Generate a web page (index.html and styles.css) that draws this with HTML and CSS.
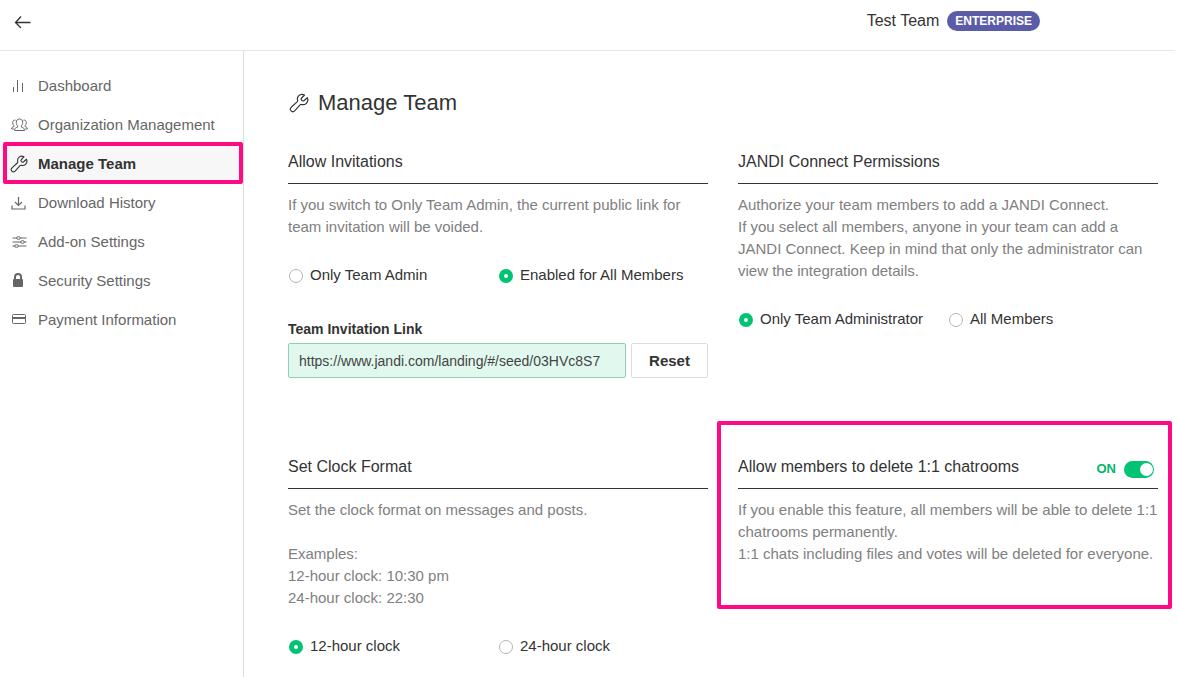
FILE: index.html
```html
<!DOCTYPE html>
<html lang="en">
<head>
    <meta charset="UTF-8">
    <meta name="viewport" content="width=device-width, initial-scale=1.0">
    <title>Manage Team</title>
    <link rel="stylesheet" href="styles.css">
</head>
<body>

    <!-- Wrench shared by the menu and the page title -->
    <svg class="sprite" aria-hidden="true">
        <symbol id="wrench" viewBox="0 0 20 20">
            <path stroke-width="1.2" stroke-linejoin="round" d="M18.300 4.700 15.200 7.500C14.300 8.200 13.200 7.900 12.600 7.200 12 6.500 12 5.700 12.600 5L15.500 2C13.500 1 11 1.300 9.600 2.900 8.400 4.200 8.200 5.900 8.600 7.500 8.700 8.100 8.500 8.500 8.100 8.900L2.200 14.300C1.200 15.300 1.100 16.900 2.100 17.900 3.100 18.900 4.700 18.800 5.700 17.800L11.100 11.900C11.500 11.500 11.900 11.400 12.500 11.500 14.200 11.900 16 11.600 17.300 10.300 18.800 8.800 19.200 6.500 18.300 4.700Z"/>
        </symbol>
    </svg>

    <header class="header">
        <a href="#" class="back" aria-label="Back">
            <svg width="17" height="14" viewBox="0 0 17 14"><path stroke-width="1.300" d="M7 1.500 1.500 7.500 7 13M1.500 7.500h15"/></svg>
        </a>
        <div class="team">
            <span class="team-name">Test Team</span>
            <span class="badge">ENTERPRISE</span>
        </div>
    </header>

    <div class="layout">
        <nav class="sidebar">
            <a href="#" class="nav-item">
                <svg class="nav-icon" viewBox="0 0 18 18"><path d="M3.500 10v5M7.500 3v12M12.500 6v9"/></svg>
                Dashboard
            </a>
            <a href="#" class="nav-item">
                <svg class="nav-icon" viewBox="0 0 18 18"><path d="M4.500 14.500h10c0-2-.8-2.600-3.200-3.500v-1.200c1-.8 1.400-2 1.400-3.500 0-2-1.200-3.300-3.200-3.300S6.300 4.300 6.300 6.300c0 1.500.4 2.700 1.400 3.500V11c-2.400.9-3.200 1.500-3.200 3.500ZM5.500 4.200C3.700 3.700 2.700 4.900 2.700 6.600c0 1.400.4 2.300 1.200 3v.9c-1.700.7-2.300 1.200-2.300 2.500h2.300M13.500 4.200c1.800-.5 2.800.7 2.800 2.400 0 1.400-.4 2.300-1.200 3v.9c1.700.7 2.300 1.200 2.300 2.500h-2.300"/></svg>
                Organization Management
            </a>
            <a href="#" class="nav-item active">
                <svg class="nav-icon"><use href="#wrench"/></svg>
                Manage Team
            </a>
            <a href="#" class="nav-item">
                <svg class="nav-icon" viewBox="0 0 18 18"><path stroke-width="1.200" d="M8.500 3v8.500M5 8l3.500 3.500L12 8M2 11.500v3.500h13v-3.500"/></svg>
                Download History
            </a>
            <a href="#" class="nav-item">
                <svg class="nav-icon" viewBox="0 0 18 18"><path stroke-width="1.200" d="M2.500 5h4m4 0h6M2.500 9h8m4 0h2M2.500 13h2m4 0h8"/><ellipse cx="8.500" cy="5" rx="2" ry="1.300"/><ellipse cx="12.500" cy="9" rx="2" ry="1.300"/><ellipse cx="6.500" cy="13" rx="2" ry="1.300"/></svg>
                Add-on Settings
            </a>
            <a href="#" class="nav-item">
                <svg class="nav-icon" viewBox="0 0 18 18"><rect class="solid" x="3" y="7" width="10" height="8" rx="1"/><path class="thick" d="M5 7.500V5a3 3 0 0 1 6 0v2.500"/></svg>
                Security Settings
            </a>
            <a href="#" class="nav-item">
                <svg class="nav-icon" viewBox="0 0 18 18"><rect x="2.500" y="3.500" width="13" height="9" rx="1"/><path class="thick" d="M2.500 7h13"/></svg>
                Payment Information
            </a>
        </nav>

        <main class="content">
            <h1 class="page-title">
                <svg class="title-icon"><use href="#wrench"/></svg>
                Manage Team
            </h1>

            <div class="settings">
                <section>
                    <h2>Allow Invitations</h2>
                    <p class="desc">If you switch to Only Team Admin, the current public link for team invitation will be voided.</p>
                    <div class="options">
                        <label><input type="radio" name="invite">Only Team Admin</label>
                        <label><input type="radio" name="invite" checked>Enabled for All Members</label>
                    </div>
                    <label class="link-label" for="inviteLink">Team Invitation Link</label>
                    <div class="link-row">
                        <input type="text" id="inviteLink" value="https://www.jandi.com/landing/#/seed/03HVc8S7" readonly>
                        <button type="button">Reset</button>
                    </div>
                </section>

                <section>
                    <h2>JANDI Connect Permissions</h2>
                    <p class="desc">Authorize your team members to add a JANDI Connect.<br>If you select all members, anyone in your team can add a JANDI Connect. Keep in mind that only the administrator can view the integration details.</p>
                    <div class="options">
                        <label><input type="radio" name="connect" checked>Only Team Administrator</label>
                        <label><input type="radio" name="connect">All Members</label>
                    </div>
                </section>

                <section>
                    <h2>Set Clock Format</h2>
                    <p class="desc">Set the clock format on messages and posts.<br><br>Examples:<br>12-hour clock: 10:30 pm<br>24-hour clock: 22:30</p>
                    <div class="options">
                        <label><input type="radio" name="clock" checked>12-hour clock</label>
                        <label><input type="radio" name="clock">24-hour clock</label>
                    </div>
                </section>

                <section class="highlight">
                    <div class="section-head">
                        <h2 id="deleteTitle">Allow members to delete 1:1 chatrooms</h2>
                        <label class="switch">ON<input type="checkbox" aria-labelledby="deleteTitle" checked></label>
                    </div>
                    <p class="desc">If you enable this feature, all members will be able to delete 1:1 chatrooms permanently.<br>1:1 chats including files and votes will be deleted for everyone.</p>
                </section>
            </div>
        </main>
    </div>

</body>
</html>
```
FILE: styles.css
```css
* {
    box-sizing: border-box;
}

body {
    margin: 0;
    background: #fff;
    color: #333;
    font-family: "Liberation Sans", Arial, sans-serif;
    font-size: 15px;
    line-height: 22px;
    min-height: 100vh;
    display: flex;
    flex-direction: column;
}

svg {
    fill: none;
    stroke: currentColor;
    flex-shrink: 0;
}

.sprite {
    display: none;
}

/* Top bar */
.header {
    display: flex;
    align-items: flex-start;
    justify-content: space-between;
    height: 51px;
    margin-right: 2px;
    padding: 10px 135px 0 14px;
    border-bottom: 1px solid #e8e8e8;
}

.back {
    display: flex;
    padding: 5px 0;
    color: #333;
}

.team {
    display: flex;
    align-items: center;
    gap: 8px;
    font-size: 16px;
}

.badge {
    padding: 0 8px;
    border-radius: 10px;
    background: #5a5ca8;
    color: #fff;
    font-size: 12px;
    font-weight: bold;
    line-height: 20px;
}

.layout {
    display: flex;
    flex: 1;
}

/* Side menu */
.sidebar {
    width: 244px;
    flex-shrink: 0;
    padding-top: 15px;
    border-right: 1px solid #ddd;
}

.nav-item {
    position: relative;
    display: flex;
    align-items: center;
    gap: 10px;
    height: 39px;
    padding-left: 10px;
    color: #666;
    text-decoration: none;
}

.nav-icon {
    width: 18px;
    height: 18px;
}

.nav-icon .solid {
    fill: currentColor;
    stroke: none;
}

.nav-icon .thick {
    stroke-width: 2;
}

.nav-item.active {
    background: #f7f7f7;
    color: #333;
    font-weight: bold;
}

/* Pink frames */
.nav-item.active::after,
.highlight::after {
    content: "";
    position: absolute;
    border: 4px solid #ff0a85;
    border-radius: 2px;
    pointer-events: none;
}

.nav-item.active::after {
    inset: -2px 0 -1px 3px;
}

.highlight {
    position: relative;
    align-self: start;
}

.highlight::after {
    inset: -34px -14px -44px -21px;
}

/* Settings */
.content {
    flex: 1;
    padding: 36px 19px 20px 44px;
}

.page-title {
    display: flex;
    align-items: center;
    gap: 8px;
    margin: 0 0 32px;
    font-size: 22px;
    font-weight: normal;
    line-height: 31px;
}

.title-icon {
    width: 22px;
    height: 20px;
}

.settings {
    display: grid;
    grid-template-columns: 1fr 1fr;
    gap: 77px 30px;
}

h2 {
    margin: 0;
    padding-bottom: 9px;
    border-bottom: 1px solid #333;
    font-size: 16px;
    font-weight: normal;
    line-height: 24px;
}

.section-head {
    display: flex;
    justify-content: space-between;
    border-bottom: 1px solid #333;
}

.section-head h2 {
    border: 0;
}

.desc {
    margin: 10px 0 26px;
    color: #808080;
}

.highlight .desc {
    margin-bottom: 0;
}

.options {
    display: grid;
    grid-template-columns: 1fr 1fr;
}

.options label {
    display: flex;
    align-items: center;
    gap: 7px;
    white-space: nowrap;
}

input[type="radio"] {
    appearance: none;
    width: 14px;
    height: 14px;
    margin: 2px 0 0 1px;
    border: 1px solid #b5b5b5;
    border-radius: 50%;
}

input[type="radio"]:checked {
    border: 5px solid #00c473;
}

.link-label {
    display: block;
    margin: 32px 0 3px;
    font-size: 14px;
    font-weight: bold;
}

.link-row {
    display: flex;
    gap: 5px;
}

.link-row input {
    flex: 1;
    min-width: 0;
    height: 35px;
    padding: 0 10px;
    border: 1px solid #8fd0b5;
    border-radius: 2px;
    background: #e1f8ee;
    color: #444;
    font: inherit;
    font-size: 14px;
}

.link-row button {
    width: 77px;
    height: 35px;
    padding: 0;
    border: 1px solid #ddd;
    border-radius: 2px;
    background: #fff;
    color: #333;
    font: inherit;
    font-weight: bold;
}

.switch {
    display: flex;
    align-items: center;
    gap: 8px;
    padding-right: 4px;
    color: #00b56c;
    font-size: 13px;
    font-weight: bold;
    margin-bottom: 5px;
}

.switch input {
    appearance: none;
    display: flex;
    justify-content: flex-end;
    width: 30px;
    height: 17px;
    margin: 0;
    padding: 2px 1px;
    border-radius: 9px;
    background: #00c473;
}

.switch input::before {
    content: "";
    width: 13px;
    height: 13px;
    border-radius: 50%;
    background: #fff;
}

.switch input:not(:checked) {
    justify-content: flex-start;
    background: #bbb;
}

@media (max-width: 900px) {
    .settings {
        grid-template-columns: 1fr;
    }
}
```
